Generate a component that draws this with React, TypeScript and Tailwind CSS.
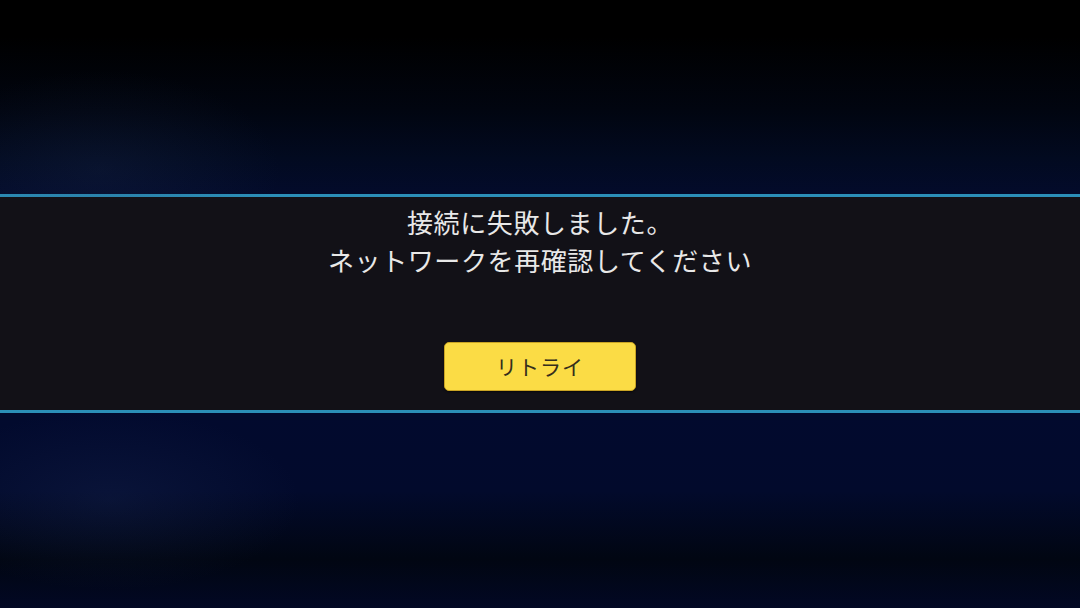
export default function App() {
  return (
    <div
      className="relative w-[1080px] h-[608px] overflow-hidden flex flex-col bg-[linear-gradient(to_bottom,#000000_0%,#000000_6%,#010510_18%,#020a20_26%,#030b2b_32%,#030b2b_100%)]"
      style={{ fontFamily: '"Noto Sans CJK JP", "Noto Sans", sans-serif' }}
    >
      <div className="h-[194px] shrink-0" />

      <div className="h-[3px] shrink-0 bg-[#2b8fb8]" />

      {/* dialog band */}
      <div className="relative z-10 h-[213px] shrink-0 bg-[#121117] flex flex-col items-center pt-[6px]">
        <p className="text-[26px] leading-[38px] tracking-[0.6px] text-[#e8e8e8] text-center">
          接続に失敗しました。
          <br />
          ネットワークを再確認してください
        </p>
        <button className="mt-[63px] w-[192px] h-[49px] rounded-[5px] bg-[#fbdc45] border border-[#c9a424] shadow-[0_1px_2px_rgba(0,0,0,0.6)] text-[21px] text-[#352e1c] tracking-[1px]">
          リトライ
        </button>
      </div>

      <div className="relative z-10 h-[3px] shrink-0 bg-[#2b8fb8]" />

      <div className="flex-1 bg-[linear-gradient(to_bottom,#020a2e_0%,#020a2c_40%,#010612_75%,#020824_100%)]" />

      {/* soft haze on the left edge */}
      <div className="absolute left-[-80px] top-[70px] w-[360px] h-[200px] rounded-full bg-[radial-gradient(closest-side,rgba(40,60,100,0.18),transparent)]" />
      <div className="absolute left-[-80px] top-[410px] w-[380px] h-[180px] rounded-full bg-[radial-gradient(closest-side,rgba(40,60,110,0.2),transparent)]" />
    </div>
  )
}
